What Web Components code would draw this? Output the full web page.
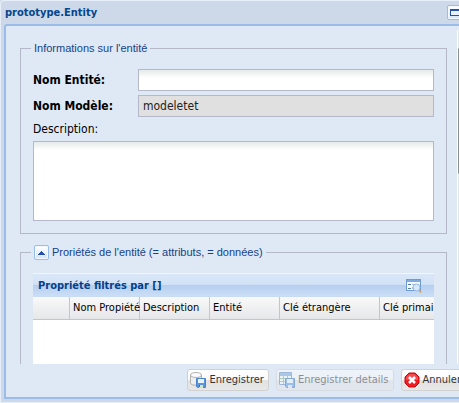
<!DOCTYPE html>
<html lang="fr">
<head>
<meta charset="utf-8">
<title>prototype.Entity</title>
<style>
  html, body { height: 100%; margin: 0; overflow: hidden; }
  body { background: #cdd9e8; font: 11px/14px "DejaVu Sans Condensed", "DejaVu Sans", sans-serif; color: #000; }
</style>
</head>
<body>
<entity-window></entity-window>

<script>
const define = (name, html) => {
  const template = document.createElement('template');
  template.innerHTML = html;
  customElements.define(name, class extends HTMLElement {
    constructor() {
      super();
      this.attachShadow({ mode: 'open' }).append(template.content.cloneNode(true));
      this.shadowRoot.querySelectorAll('[data-attr]').forEach(el => {
        const [target, source] = el.dataset.attr.split(':');
        if (!this.hasAttribute(source)) return;
        if (target === 'text') el.textContent = this.getAttribute(source);
        else el.setAttribute(target, this.getAttribute(source));
      });
    }
  });
};

define('tool-button', `
  <style>
    :host { display: inline-flex; flex: none; }
    button { display: flex; align-items: center; justify-content: center; width: 15px; height: 15px; padding: 0;
      border: 1px solid #99bce8; border-radius: 2px; background: linear-gradient(#fff, #d3e4f9); box-shadow: inset 0 0 0 1px #f4f9ff; }
  </style>
  <button type="button" data-attr="aria-label:label"><slot></slot></button>`);

define('action-button', `
  <style>
    :host { display: block; flex: none; }
    button { display: flex; align-items: center; gap: 3px; height: 22px; padding: 0 4px 0 2px; font: inherit; color: #333;
      border: 1px solid #d1d1d1; border-radius: 3px; background: linear-gradient(#fff, #f9f9f9 48%, #e2e2e2 52%, #e7e7e7); white-space: nowrap; }
    :host([inactive]) button { opacity: .5; }
  </style>
  <button type="button" data-attr="aria-disabled:inactive"><slot name="icon"></slot><slot></slot></button>`);

define('field-group', `
  <style>
    :host { display: block; }
    fieldset { margin: 0; min-width: 0; padding: 14px 12px 12px; border: 1px solid #b5b8c8; }
    legend { display: flex; align-items: center; gap: 3px; margin-left: -2px; padding: 0 3px;
      font: 11px/14px "Liberation Sans", Arial, sans-serif; color: #15428b; }
    :host([collapsible]) fieldset { padding-top: 12px; }
    :host([collapsible]) legend { line-height: 17px; }
    tool-button { display: none; }
    :host([collapsible]) tool-button { display: inline-flex; }
  </style>
  <fieldset>
    <legend><tool-button label="Replier"><svg width="7" height="4" viewBox="0 0 7 4" shape-rendering="crispEdges"><path d="M3 0h1v1h1v1h1v1h1v1H0V3h1V2h1V1h1z" fill="#2850a8"/></svg></tool-button><span data-attr="text:heading"></span></legend>
    <slot></slot>
  </fieldset>`);

define('text-field', `
  <style>
    :host { display: grid; grid-template-columns: 105px 1fr; align-items: center; margin-bottom: 4px; font-size: 12px; }
    label { font-weight: bold; }
    input { box-sizing: border-box; width: 100%; min-width: 0; height: 22px; padding: 0 4px; border: 1px solid #b5b8c8; border-radius: 0;
      background: #fff linear-gradient(#e6eaea, #fff) 0 0 / 100% 8px no-repeat; font: inherit; color: #222; outline: 0; }
    :host([locked]) input { background: #e0e0e0; }
  </style>
  <label for="f" data-attr="text:label"></label>
  <input id="f" type="text" data-attr="value:value">`);

define('text-zone', `
  <style>
    :host { display: grid; gap: 4px; font-size: 12px; line-height: 16px; }
    textarea { display: block; box-sizing: border-box; width: 100%; margin: 0; padding: 3px 4px; resize: none; border: 1px solid #b5b8c8; border-radius: 0;
      background: #fff linear-gradient(#e6eaea, #fff) 0 0 / 100% 8px no-repeat; font: inherit; line-height: 18px; outline: 0; }
  </style>
  <label for="t" data-attr="text:label"></label>
  <textarea id="t" rows="4"></textarea>`);

define('property-grid', `
  <style>
    :host { display: block; overflow: hidden; background: #fff; }
    header { display: flex; align-items: center; justify-content: space-between; height: 24px; box-sizing: border-box; padding: 0 12px 0 5px;
      border-top: 1px solid #f2f7fd; background: linear-gradient(#d9e7f8, #d2e2f6 45%, #b6cff0 50%, #cbdef5 96%, #c4d8f0); }
    h2 { margin: 0; font: bold 11px/14px "DejaVu Sans Condensed", "DejaVu Sans", sans-serif; color: #04408c; }
    header button { display: flex; padding: 0; border: 0; background: none; }
    table { table-layout: fixed; width: 467px; border-collapse: separate; border-spacing: 0; }
    th { box-sizing: border-box; height: 23px; padding: 0 0 0 3px; white-space: nowrap; text-align: left; font-weight: normal;
      border-right: 1px solid #c5c5c5; border-bottom: 1px solid #c5c5c5; background: linear-gradient(#f9f9f9, #e6e7e9); }
    td { height: 160px; padding: 0; }
  </style>
  <header><h2>Propriété filtrés par []</h2>
    <button type="button" aria-label="Filtrer">
      <svg width="16" height="16" viewBox="0 0 16 16"><rect x=".5" y="1.5" width="14" height="11" fill="#f4f9ff" stroke="#6e9bd0"/><path d="M1 2h13v2H1z" fill="#7fabdf"/><path d="M2 6.500h3M2 10.500h3" stroke="#557ca9"/><path d="M6 6h7v1H6zM6 9h3v2H6z" fill="#a9bfd8"/><path d="m13 12 2 2.500" stroke="#dda064" stroke-width="2"/><circle cx="10.500" cy="9.500" r="3.500" fill="#d5e9fc" stroke="#96b9e0"/></svg>
    </button>
  </header>
  <table>
    <colgroup><col style="width:37px"><col style="width:70px"><col style="width:70px"><col style="width:70px"><col style="width:100px"><col></colgroup>
    <thead><tr><th></th><th>Nom Propiété</th><th>Description</th><th>Entité</th><th>Clé étrangère</th><th>Clé primaire</th></tr></thead>
    <tbody><tr><td colspan="6"></td></tr></tbody>
  </table>`);

define('scroll-track', `
  <style>
    :host { display: flex; flex-direction: column; width: 17px; flex: none; box-sizing: border-box; margin-top: 4px; border-left: 1px solid #fff; background: #e6e6e6; }
    i { flex: 0 0 37%; margin-top: 18px; border: 1px solid #8e8e8e; border-radius: 1px; background: #ddd; }
  </style><i></i>`);

define('entity-window', `
  <style>
    :host { display: flex; flex-direction: column; box-sizing: border-box; width: calc(100% + 21px); height: 100%;
      padding: 0 4px 3px 3px; border-top: 1px solid #e6eff9; border-left: 1px solid #e6eff9; border-bottom: 1px solid #e6eff9; border-top-left-radius: 4px; background: #cdd9e8; }
    .title { display: flex; align-items: center; justify-content: space-between; flex: none; height: 23px; padding: 0 14px 0 1px; }
    h1 { margin: 0; font: bold 11px/14px "DejaVu Sans Condensed", "DejaVu Sans", sans-serif; color: #04468c; }
    main { flex: 1; min-height: 0; display: flex; flex-direction: column; border: 2px solid #99bce8; border-top-left-radius: 3px; background: #dfe9f6; }
    .view { flex: 1; min-height: 0; display: flex; }
    form { flex: 1; min-width: 0; overflow: hidden; padding: 15px 10px 0 14px; }
    field-group + field-group { margin-top: 10px; }
    footer { flex: none; display: flex; justify-content: flex-end; gap: 7px; padding: 5px 8px 6px; }
    svg { display: block; flex: none; }
  </style>
  <div class="title"><h1>prototype.Entity</h1>
    <tool-button label="Agrandir"><svg width="10" height="8" viewBox="0 0 10 8"><path d="M0 0h10v7H0z" fill="#2850a8"/><path d="M1 2h8v4H1z" fill="#e7f1ff"/></svg></tool-button>
  </div>
  <main>
    <div class="view">
      <form>
        <field-group heading="Informations sur l'entité">
          <text-field label="Nom Entité:"></text-field>
          <text-field label="Nom Modèle:" value="modeletet" locked></text-field>
          <text-zone label="Description:"></text-zone>
        </field-group>
        <field-group heading="Proriétés de l'entité (= attributs, = données)" collapsible>
          <property-grid></property-grid>
        </field-group>
      </form>
      <scroll-track></scroll-track>
    </div>
    <footer>
      <action-button>
        <svg slot="icon" width="16" height="16" viewBox="0 0 16 16"><path d="M.5 3v8c0 3 11 3 11 0V3" fill="#eee" stroke="#b2b2b2"/><ellipse cx="6" cy="3" rx="5.500" ry="2.500" fill="#fafafa" stroke="#b2b2b2"/><path d="M6.500 6.500h9v9h-8l-1-1z" fill="#5c94dc" stroke="#4a82cc"/><path d="M8 7h6v4H8z" fill="#e7f3ff"/><path d="M9 13h4v3H9z" fill="#cfe8b5"/><path d="M9 13h1v2H9z" fill="#3b7b46"/></svg>
        Enregistrer
      </action-button>
      <action-button inactive="true">
        <svg slot="icon" width="16" height="16" viewBox="0 0 16 16"><path d="M.5.500h12v12H.500z" fill="#f6fbf4" stroke="#5b86c0"/><path d="M1 1h11v3H1z" fill="#79a7dc"/><path d="M1 6.500h11M1 9.500h11M4.500 4v8M8.500 4v8" stroke="#7fb58d"/><path d="M6.500 6.500h9v9h-8l-1-1z" fill="#5c94dc" stroke="#2f6cb8"/><path d="M8 7h6v4H8z" fill="#e7f3ff"/><path d="M9 13h4v3H9z" fill="#e4e4e4"/></svg>
        Enregistrer details
      </action-button>
      <action-button>
        <svg slot="icon" width="16" height="16" viewBox="0 0 16 16"><path d="M5 1h6l4 4v6l-4 4H5l-4-4V5z" fill="#ef1c22" stroke="#c60d12" stroke-linejoin="round"/><path d="M5.300 2h5.400L14 5.300V8H2V5.300z" fill="#fa6d70" opacity=".6"/><path d="m5 5 6 6m0-6-6 6" stroke="#fff" stroke-width="2.600"/></svg>
        Annuler
      </action-button>
    </footer>
  </main>`);
</script>
</body>
</html>
